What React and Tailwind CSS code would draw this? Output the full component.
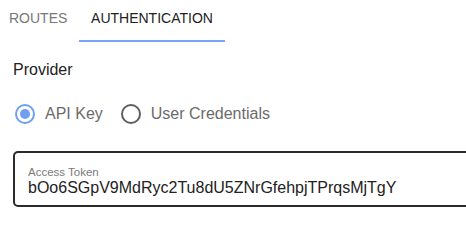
import { useState } from 'react';

function Radio({ checked, label, onClick }) {
  return (
    <button onClick={onClick} className="flex items-center gap-[10px] h-[24px]">
      <span
        className={`w-[20px] h-[20px] rounded-full border-2 flex items-center justify-center ${
          checked ? 'border-[#6f9ff3]' : 'border-[#5f5f5f]'
        }`}
      >
        {checked && <span className="w-[10px] h-[10px] rounded-full bg-[#6f9ff3]"></span>}
      </span>
      <span className="text-[16px] leading-[24px] text-[#6b6b6b]">{label}</span>
    </button>
  );
}

export default function App() {
  const [tab, setTab] = useState('auth');
  const [provider, setProvider] = useState('apikey');

  return (
    <div className="w-[466px] h-[243px] overflow-hidden bg-white font-['Liberation_Sans',Arial,sans-serif]">
        {/* tabs */}
        <div className="flex h-[42px]">
            <button
                onClick={() => setTab('routes')}
                className={`flex items-start w-[79px] pl-[9px] pt-[8px] text-[14px] leading-[21px] uppercase ${
                    tab === 'routes' ? 'text-[#222] border-b-2 border-[#78a6f6]' : 'text-[#777] border-b-2 border-transparent'
                }`}
            >
                Routes
            </button>
            <button
                onClick={() => setTab('auth')}
                className={`flex items-start justify-center w-[146px] pt-[8px] text-[14px] leading-[21px] uppercase ${
                    tab === 'auth' ? 'text-[#222] border-b-2 border-[#78a6f6]' : 'text-[#777] border-b-2 border-transparent'
                }`}
            >
                Authentication
            </button>
        </div>

        <div className="pl-[13px] mt-[16px] text-[16px] leading-[24px] text-[#222]">Provider</div>

        <div className="flex items-center gap-[18px] pl-[15px] mt-[20px]">
            <Radio checked={provider === 'apikey'} label="API Key" onClick={() => setProvider('apikey')} />
            <Radio checked={provider === 'user'} label="User Credentials" onClick={() => setProvider('user')} />
        </div>

        <div className="ml-[13px] mt-[25px] w-[480px] h-[56px] border-2 border-[#2b2b2b] rounded-[5px] pl-[13px] pt-[12px]">
            <div className="text-[11.5px] leading-[14px] text-[#7a7a7a]">Access Token</div>
            <div className="text-[16px] leading-[18px] text-[#222]">bOo6SGpV9MdRyc2Tu8dU5ZNrGfehpjTPrqsMjTgY</div>
        </div>
    </div>
  );
}
